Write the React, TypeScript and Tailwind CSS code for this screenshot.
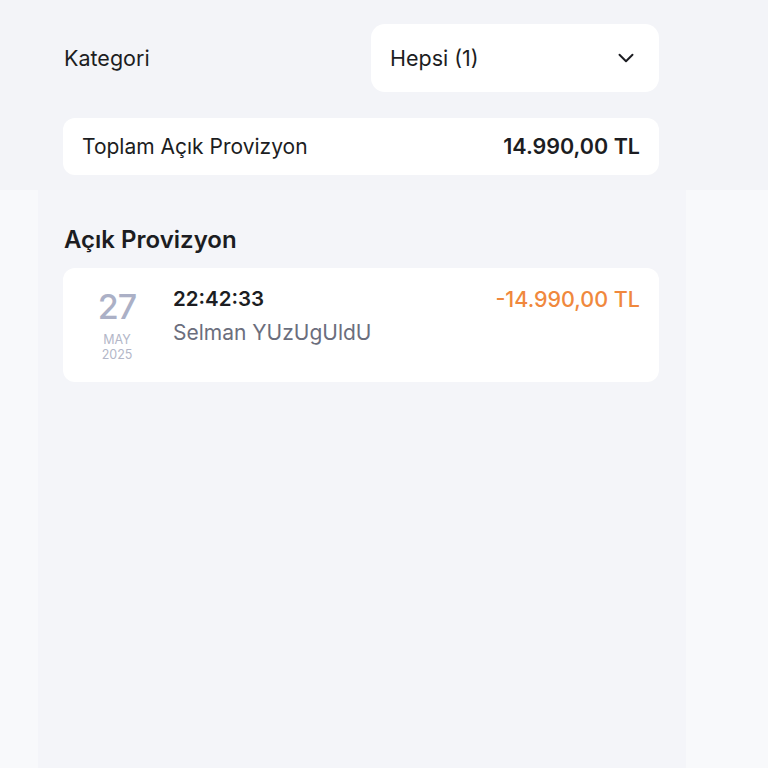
import { ChevronDown } from "lucide-react";

const font = { fontFamily: "Inter, 'Noto Sans', sans-serif" };

function DateBadge() {
  return (
    <div className="flex w-[64px] shrink-0 flex-col items-center pt-[2px]">
      <span className="text-[34px] font-medium leading-[36px] tracking-tight text-[#abb0c6]">27</span>
      <span className="mt-[7px] text-[12.5px] leading-[15px] text-[#b3b7c8]">MAY</span>
      <span className="text-[12.5px] leading-[15px] text-[#b3b7c8]">2025</span>
    </div>
  );
}

export default function App() {
  return (
    <div className="min-h-screen bg-[#f8f9fb]" style={font}>
      <div className="bg-[#f3f4f8] pb-[15px] pt-6">
        <div className="ml-[38px] w-[648px] pl-[25px] pr-[27px]">
          <div className="flex items-center justify-between">
            <span className="pl-px text-[21.5px] text-[#1c1d22]">Kategori</span>
            <button className="flex h-[68px] w-[288px] items-center justify-between rounded-[14px] bg-white pl-[19px] pr-[20px] text-[21.5px] text-[#1c1d22]">
              <span>Hepsi (1)</span>
              <ChevronDown className="h-[26px] w-[26px] text-[#1c1d22]" strokeWidth={1.8} />
            </button>
          </div>
          <div className="mt-[26px] flex h-[57px] items-center justify-between rounded-[12px] bg-white pl-[19px] pr-[19px]">
            <span className="text-[21px] text-[#1c1d22]">Toplam Açık Provizyon</span>
            <span className="text-[21.5px] font-semibold text-[#1c1d22]">14.990,00 TL</span>
          </div>
        </div>
      </div>

      <div className="ml-[38px] min-h-[578px] w-[648px] bg-[#f4f5f9] pl-[25px] pr-[27px] pt-[34px]">
        <h2 className="pl-px text-[24px] font-semibold leading-[32px] text-[#1c1d22]">Açık Provizyon</h2>
        <div className="mt-[12px] flex h-[114px] rounded-[12px] bg-white pl-[22px] pr-[19px] pt-[19px]">
          <DateBadge />
          <div className="ml-[24px] flex flex-1 flex-col">
            <div className="flex items-start justify-between">
              <span className="text-[20.5px] font-semibold leading-[24px] text-[#1c1d22]">22:42:33</span>
              <span className="text-[21.5px] font-medium leading-[24px] text-[#f0883d]">-14.990,00 TL</span>
            </div>
            <span className="mt-[10px] text-[21px] leading-[24px] text-[#6b6e7d]">Selman YUzUgUldU</span>
          </div>
        </div>
      </div>
    </div>
  );
}
